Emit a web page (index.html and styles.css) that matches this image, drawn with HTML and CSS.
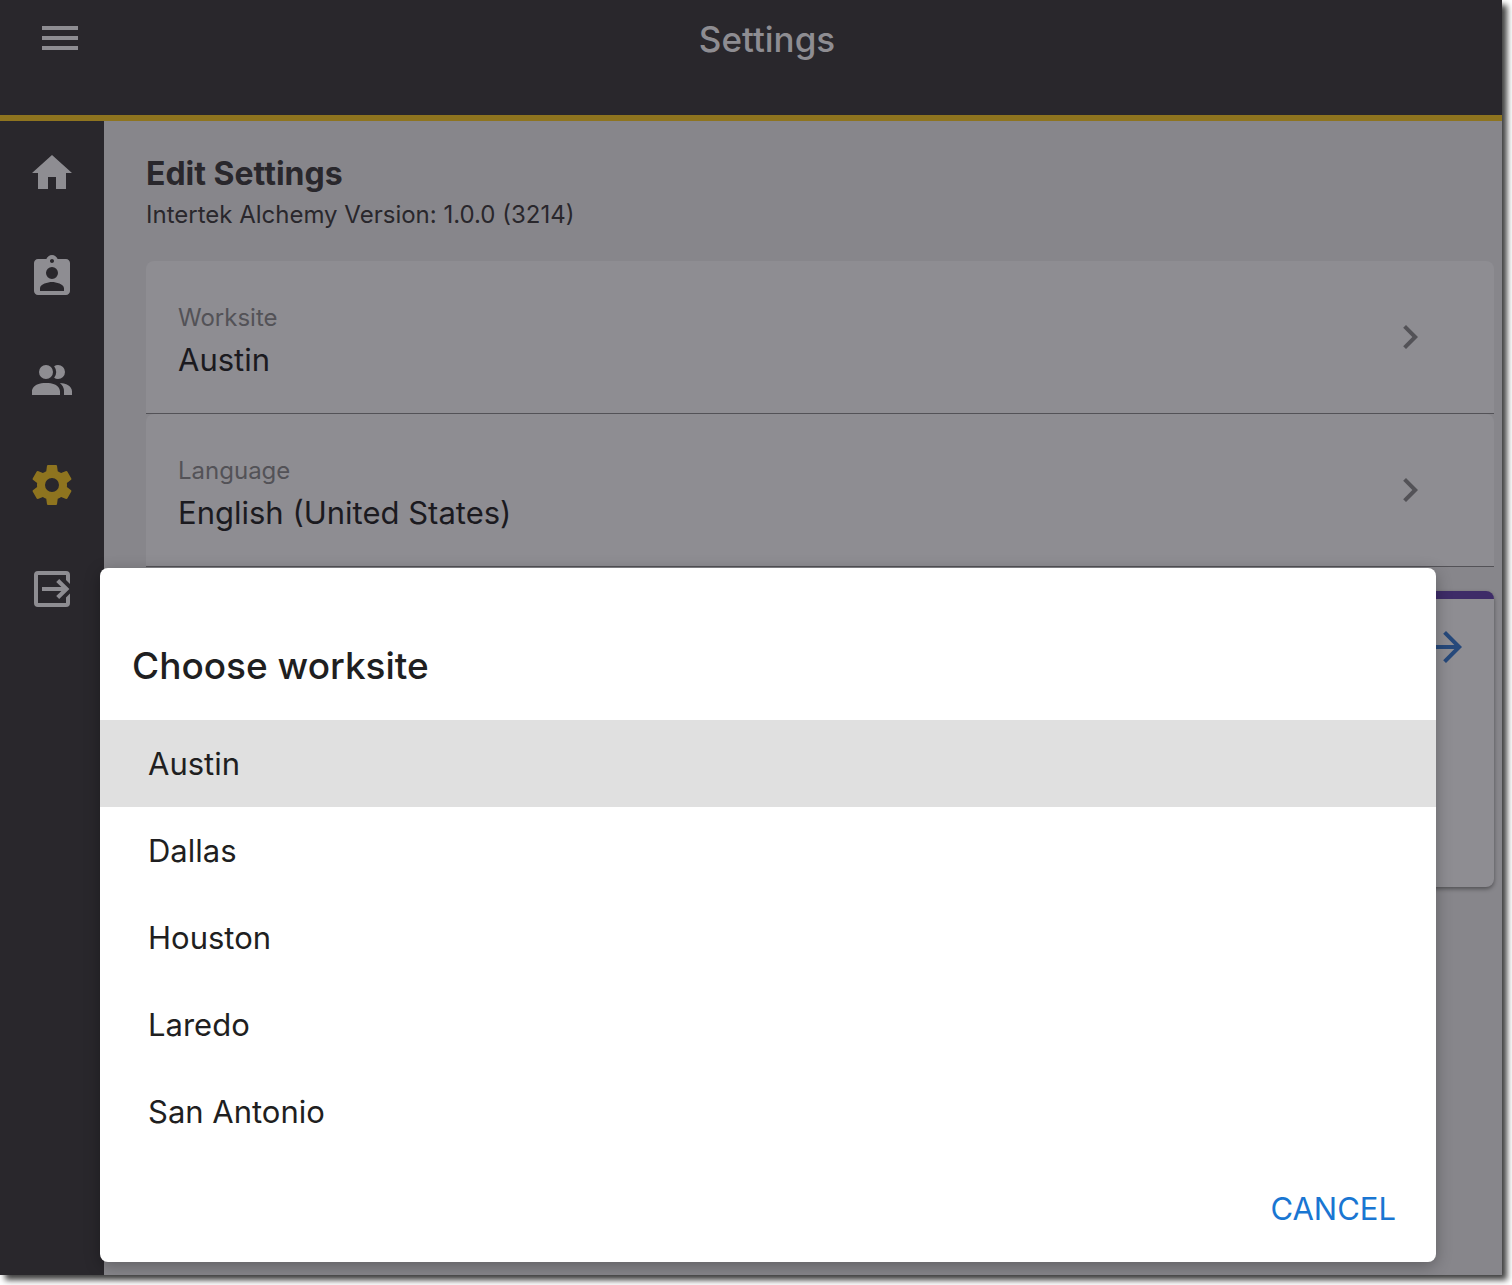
FILE: index.html
```html
<!DOCTYPE html>
<html lang="en">
<head>
<meta charset="utf-8">
<meta name="viewport" content="width=device-width, initial-scale=1">
<title>Settings</title>
<link rel="stylesheet" href="styles.css">
</head>
<body>
<div class="app">
  <header class="topbar">
    <button class="menu-button" type="button" aria-label="Menu">
      <svg class="icon" viewBox="0 0 24 24"><path d="M3 6h18v2H3zM3 11h18v2H3zM3 16h18v2H3z"/></svg>
    </button>
    <h1 class="page-title">Settings</h1>
  </header>
  <div class="body">
    <nav class="sidebar" aria-label="Main">
      <a class="nav-link" href="#home" aria-label="Home">
        <svg class="icon" viewBox="0 0 24 24"><path d="M10 20v-6h4v6h5v-8h3L12 3 2 12h3v8z"/></svg>
      </a>
      <a class="nav-link" href="#profile" aria-label="Profile">
        <svg class="icon" viewBox="0 0 24 24"><path d="M19 3h-4.180C14.400 1.840 13.300 1 12 1s-2.400.840-2.820 2H5c-1.100 0-2 .9-2 2v14c0 1.100.9 2 2 2h14c1.100 0 2-.9 2-2V5c0-1.100-.9-2-2-2zm-7 0c.55 0 1 .45 1 1s-.45 1-1 1-1-.45-1-1 .45-1 1-1zm0 4a3 3 0 1 1 0 6 3 3 0 0 1 0-6zm6 12H6v-1.400c0-2 4-3.100 6-3.100s6 1.100 6 3.100V19z"/></svg>
      </a>
      <a class="nav-link" href="#people" aria-label="People">
        <svg class="icon" viewBox="0 0 24 24"><path d="M16 17v2H2v-2s0-4 7-4 7 4 7 4m-3.500-9.500A3.500 3.500 0 1 0 9 11a3.500 3.500 0 0 0 3.500-3.500m3.440 5.500A5.320 5.320 0 0 1 18 17v2h4v-2s0-3.630-6.060-4M15 4a3.390 3.390 0 0 0-1.930.590 5 5 0 0 1 0 5.820A3.390 3.390 0 0 0 15 11a3.500 3.500 0 0 0 0-7z"/></svg>
      </a>
      <a class="nav-link nav-link-active" href="#settings" aria-label="Settings" aria-current="page">
        <svg class="icon" viewBox="0 0 24 24"><path d="M12 15.500A3.500 3.500 0 0 1 8.500 12 3.500 3.500 0 0 1 12 8.500a3.500 3.500 0 0 1 3.500 3.500 3.500 3.500 0 0 1-3.500 3.500m7.430-2.530c.04-.32.07-.64.07-.97 0-.33-.03-.66-.07-1l2.110-1.630c.19-.15.24-.42.12-.64l-2-3.460c-.12-.22-.39-.31-.61-.22l-2.490 1c-.52-.39-1.060-.73-1.690-.98l-.37-2.650A.506.506 0 0 0 14 2h-4c-.25 0-.46.18-.5.42l-.37 2.650c-.63.25-1.170.59-1.690.98l-2.490-1c-.22-.09-.49 0-.61.22l-2 3.460c-.13.22-.07.49.12.64L4.570 11c-.04.34-.07.67-.07 1 0 .33.03.65.07.97l-2.110 1.660c-.19.15-.25.42-.12.64l2 3.460c.12.22.39.3.61.22l2.490-1.010c.52.4 1.060.74 1.690.99l.37 2.650c.04.24.25.42.5.42h4c.25 0 .46-.18.5-.42l.37-2.650c.63-.26 1.170-.59 1.690-.99l2.490 1.010c.22.08.49 0 .61-.22l2-3.460c.12-.22.07-.49-.12-.64z"/></svg>
      </a>
      <a class="nav-link" href="#logout" aria-label="Log out">
        <svg class="icon" viewBox="0 0 24 24"><path d="M5 3h14a2 2 0 0 1 2 2v4.500l-2-2V5H5v14h14v-2.700l2-2V19a2 2 0 0 1-2 2H5a2 2 0 0 1-2-2V5a2 2 0 0 1 2-2z"/><path d="M7 11h9.700l-2.600-2.500L15.600 7l5.100 5-5.100 5-1.500-1.500 2.600-2.500H7z"/></svg>
      </a>
    </nav>
    <main class="content">
      <h2 class="heading">Edit Settings</h2>
      <p class="version">Intertek Alchemy Version: 1.0.0 (3214)</p>
      <button class="setting" type="button">
        <span class="setting-text">
          <span class="setting-label">Worksite</span>
          <span class="setting-value">Austin</span>
        </span>
        <svg class="icon" viewBox="0 0 24 24"><path d="M8.590 16.590 13.170 12 8.590 7.410 10 6l6 6-6 6z"/></svg>
      </button>
      <button class="setting" type="button">
        <span class="setting-text">
          <span class="setting-label">Language</span>
          <span class="setting-value">English (United States)</span>
        </span>
        <svg class="icon" viewBox="0 0 24 24"><path d="M8.590 16.590 13.170 12 8.590 7.410 10 6l6 6-6 6z"/></svg>
      </button>
      <section class="card">
        <button class="card-open" type="button" aria-label="Open">
          <svg class="icon" viewBox="0 0 24 24"><path d="m12 4-1.410 1.410L16.170 11H4v2h12.170l-5.580 5.590L12 20l8-8z"/></svg>
        </button>
      </section>
    </main>
  </div>
  <div class="dialog" role="dialog" aria-labelledby="dialog-title">
    <h2 class="dialog-title" id="dialog-title">Choose worksite</h2>
    <ul class="options">
      <li><button class="option option-selected" type="button" aria-pressed="true">Austin</button></li>
      <li><button class="option" type="button">Dallas</button></li>
      <li><button class="option" type="button">Houston</button></li>
      <li><button class="option" type="button">Laredo</button></li>
      <li><button class="option" type="button">San Antonio</button></li>
    </ul>
    <div class="dialog-actions">
      <button class="cancel" type="button">CANCEL</button>
    </div>
  </div>
</div>
</body>
</html>
```
FILE: styles.css
```css
*,
*::before,
*::after {
  box-sizing: border-box;
}

body {
  margin: 0;
  min-height: 100vh;
  padding: 0 10px 10px 0;
  display: flex;
  background: #fff;
  color: #29272c;
  font-family: Inter, "Liberation Sans", sans-serif;
}

h1,
h2,
p,
ul {
  margin: 0;
  padding: 0;
}

button {
  border: 0;
  padding: 0;
  background: none;
  color: inherit;
  font: inherit;
  text-align: left;
}

.icon {
  display: block;
  flex: none;
  width: 48px;
  height: 48px;
  fill: currentColor;
}

.app {
  position: relative;
  flex: 1;
  display: flex;
  flex-direction: column;
  background: #87868b;
  box-shadow: 5px 5px 6px rgba(0, 0, 0, 0.75);
}

.topbar {
  display: grid;
  grid-template-columns: 84px 1fr 52px;
  align-items: start;
  padding: 14px 0 51px;
  border-bottom: 6px solid #8e741f;
  background: #29272c;
  color: #8e8d92;
}

.menu-button {
  padding-left: 36px;
}

.page-title {
  font-size: 35px;
  font-weight: 500;
  line-height: 50px;
  text-align: center;
}

.body {
  flex: 1;
  display: flex;
}

.sidebar {
  flex: none;
  width: 104px;
  background: #29272c;
}

.nav-link {
  display: flex;
  align-items: center;
  justify-content: center;
  height: 104px;
  color: #8e8d92;
}

.nav-link-active {
  color: #8e741f;
}

.content {
  flex: 1;
  min-width: 0;
  padding: 32px 8px 0 42px;
}

.heading {
  font-size: 32px;
  font-weight: 700;
  line-height: 42px;
}

.version {
  margin: 4px 0 30px;
  font-size: 24px;
  line-height: 32px;
}

.setting {
  display: flex;
  align-items: center;
  justify-content: space-between;
  width: 100%;
  height: 153px;
  padding: 0 60px 0 32px;
  border-bottom: 1px solid #535257;
  border-radius: 8px 8px 0 0;
  background: #8e8d92;
  color: #535257;
}

.setting-text {
  display: grid;
  gap: 6px;
  padding-top: 8px;
}

.setting-label {
  font-size: 24px;
  line-height: 32px;
}

.setting-value {
  color: #1b1a1f;
  font-size: 31px;
  line-height: 40px;
}

.card {
  display: flex;
  justify-content: flex-end;
  align-items: flex-start;
  height: 296px;
  margin-top: 24px;
  padding: 24px;
  border-top: 8px solid #3e2c68;
  border-radius: 8px;
  background: #8e8d92;
  box-shadow: 0 2px 4px rgba(0, 0, 0, 0.4);
}

.card-open {
  color: #26497b;
}

.dialog {
  position: absolute;
  right: 66px;
  bottom: 13px;
  left: 100px;
  border-radius: 8px;
  background: #fff;
  box-shadow: 0 4px 16px rgba(0, 0, 0, 0.3);
  color: #1f1f21;
}

.dialog-title {
  padding: 74px 32px 30px;
  font-size: 37px;
  font-weight: 500;
  line-height: 48px;
}

.options {
  list-style: none;
}

.option {
  display: block;
  width: 100%;
  height: 87px;
  padding: 0 48px;
  font-size: 31px;
  line-height: 40px;
}

.option-selected {
  background: #e0e0e0;
}

.dialog-actions {
  display: flex;
  justify-content: flex-end;
  padding: 34px 40px 33px;
}

.cancel {
  color: #1976d2;
  font-size: 31px;
  line-height: 40px;
}
```
